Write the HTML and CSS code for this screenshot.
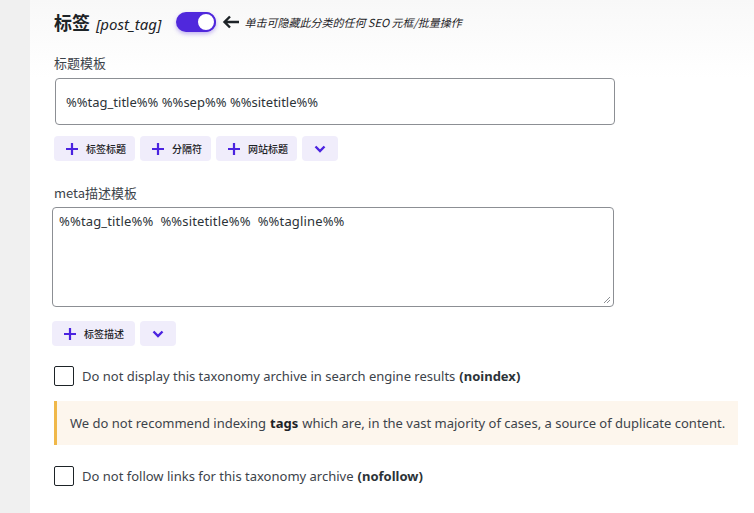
FILE: index.html
```html
<!DOCTYPE html>
<html lang="zh">
<head>
<meta charset="utf-8">
<link rel="stylesheet" href="styles.css">
</head>
<body>
<div class="page">
  <aside class="side"></aside>
  <main class="main">
    <header class="head">
      <h2 class="title">标签<em class="slug">[post_tag]</em></h2>
      <span class="toggle"><span class="knob"></span></span>
      <span class="arrow">
        <svg width="18" height="14" viewBox="0 0 18 14"><path d="M17 7H3M8 1.5L2.5 7 8 12.5" fill="none" stroke="#1d2327" stroke-width="2.4" stroke-linecap="butt"/></svg>
      </span>
      <span class="hint">单击可隐藏此分类的任何 SEO 元框/批量操作</span>
    </header>

    <section class="field">
      <label class="label">标题模板</label>
      <div class="input">%%tag_title%% %%sep%% %%sitetitle%%</div>
      <div class="btns">
        <button class="btn"><svg class="plus" viewBox="0 0 12 12"><path d="M6 0V12M0 6H12" stroke="#4b23e0" stroke-width="2.2"/></svg>标签标题</button>
        <button class="btn"><svg class="plus" viewBox="0 0 12 12"><path d="M6 0V12M0 6H12" stroke="#4b23e0" stroke-width="2.2"/></svg>分隔符</button>
        <button class="btn"><svg class="plus" viewBox="0 0 12 12"><path d="M6 0V12M0 6H12" stroke="#4b23e0" stroke-width="2.2"/></svg>网站标题</button>
        <button class="btn more"><svg class="chev" viewBox="0 0 12 8"><path d="M1.5 1.5L6 6 10.5 1.5" fill="none" stroke="#4b23e0" stroke-width="2.4"/></svg></button>
      </div>
    </section>

    <section class="field field2">
      <label class="label">meta描述模板</label>
      <div class="textarea">%%tag_title%%&nbsp; %%sitetitle%%&nbsp; %%tagline%%
        <svg class="grip" viewBox="0 0 8 8"><path d="M7 1L1 7M7 4L4 7" stroke="#8c8f94" stroke-width="1"/></svg>
      </div>
      <div class="btns">
        <button class="btn"><svg class="plus" viewBox="0 0 12 12"><path d="M6 0V12M0 6H12" stroke="#4b23e0" stroke-width="2.2"/></svg>标签描述</button>
        <button class="btn more"><svg class="chev" viewBox="0 0 12 8"><path d="M1.5 1.5L6 6 10.5 1.5" fill="none" stroke="#4b23e0" stroke-width="2.4"/></svg></button>
      </div>
    </section>

    <label class="check"><span class="box"></span>Do not display this taxonomy archive in search engine results <b>(noindex)</b></label>

    <div class="notice">We do not recommend indexing <b>tags</b> which are, in the vast majority of cases, a source of duplicate content.</div>

    <label class="check check2"><span class="box"></span>Do not follow links for this taxonomy archive <b>(nofollow)</b></label>
  </main>
</div>
</body>
</html>
```
FILE: styles.css
```css
* { box-sizing: border-box; }
html, body { margin: 0; padding: 0; }
body {
  font-family: "Noto Sans", "Noto Sans CJK SC", sans-serif;
  color: #3c434a;
  background: #fff;
}
.page { display: flex; min-height: 513px; }
.side { width: 30px; flex: none; background: #f0f0f0; }
.main {
  flex: 1;
  display: flex;
  flex-direction: column;
  background: linear-gradient(#f8f8f8, #fff 78px) no-repeat;
}

.head {
  height: 54px;
  padding: 10px 0 0 24px;
  display: flex;
  align-items: flex-start;
}
.title {
  margin: 0;
  font-size: 18px;
  font-weight: 700;
  color: #1d2327;
  line-height: 24px;
  font-family: "Noto Sans CJK SC", sans-serif;
}
.slug {
  font-family: "Noto Sans", sans-serif;
  font-weight: 400;
  font-size: 15px;
  font-style: italic;
  margin-left: 6px;
}
.toggle {
  margin: 2px 0 0 15px;
  width: 40px; height: 20px;
  border-radius: 10px;
  background: #5028dc;
  position: relative;
  box-shadow: 0 2px 4px rgba(80,40,220,.35);
}
.knob {
  position: absolute;
  right: 0; top: 0;
  width: 20px; height: 20px;
  border-radius: 50%;
  background: #fff;
  border: 2px solid #5028dc;
}
.arrow { margin: 5px 0 0 6px; display: flex; }
.hint {
  margin: 5px 0 0 4px;
  font-size: 11px;
  font-style: italic;
  color: #1d2327;
  line-height: 14px;
  font-family: "Noto Sans CJK SC", sans-serif;
}

.field { padding-left: 24px; }
.label {
  display: block;
  font-size: 13px;
  line-height: 18px;
  margin: 0 0 6px;
  font-family: "Noto Sans CJK SC", sans-serif;
}
.input {
  margin-left: 1px;
  width: 560px; height: 47px;
  border: 1px solid #8c8f94;
  border-radius: 4px;
  padding: 0 10px;
  display: flex; align-items: center;
  font-size: 13px;
  color: #2c3338;
}
.btns { display: flex; gap: 5px; margin-top: 11px; }
.btn {
  height: 25px;
  border: 0;
  border-radius: 4px;
  background: #f0edfb;
  display: flex; align-items: center;
  padding: 0 9px 0 12px;
  font-family: "Noto Sans CJK SC", sans-serif;
  font-size: 10px;
  font-weight: 500;
  color: #1d2327;
}
.plus { width: 12px; height: 12px; margin-right: 8px; }
.btn.more { width: 36px; justify-content: center; padding: 0; }
.chev { width: 12px; height: 8px; }

.field2 { margin-top: 23px; padding-left: 22px; }
.field2 .label { margin: 0 0 5px 2px; }
.textarea {
  position: relative;
  width: 562px; height: 100px;
  border: 1px solid #8c8f94;
  border-radius: 4px;
  padding: 4px 6px;
  font-size: 13px;
  letter-spacing: 0.15px;
  color: #2c3338;
  line-height: 18px;
}
.grip { position: absolute; right: 2px; bottom: 2px; width: 8px; height: 8px; }
.field2 .btns { margin-top: 14px; }
.field2 .btn:first-child { padding-right: 11px; }

.check {
  display: flex; align-items: center;
  margin: 20px 0 0 24px;
  font-size: 13px;
  line-height: 20px;
}
.check b { font-weight: 700; color: #2c3338; margin-left: 4px; }
.box {
  width: 20px; height: 20px;
  border: 1px solid #1d2327;
  border-radius: 2px;
  margin-right: 8px;
  flex: none;
}
.notice {
  margin: 15px 20px 0 24px;
  height: 44px;
  background: #fdf6ed;
  border-left: 3px solid #f0b849;
  padding: 0 13px;
  display: flex; align-items: center;
  font-size: 13px;
  white-space: nowrap;
}
.notice b { margin: 0 4px; color: #1d2327; }
.check2 { margin-top: 21px; }
```
